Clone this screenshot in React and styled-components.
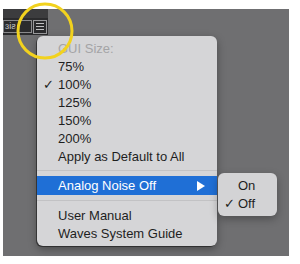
import React from "react";
import styled, { createGlobalStyle } from "styled-components";

const Global = createGlobalStyle`
  html, body { margin: 0; padding: 0; background: #ffffff; }
  body { font-family: "Liberation Sans", Arial, sans-serif; }
`;

const Page = styled.div`
  width: 300px;
  height: 264px;
  box-sizing: border-box;
  padding: 9px 11px 8px 3px;
  position: relative;
`;

const Panel = styled.div`
  position: relative;
  width: 100%;
  height: 100%;
  background: #6f6f71;
`;

const Toolbar = styled.div`
  width: 45px;
  display: flex;
  flex-direction: column;
`;

const TopStrip = styled.div`
  height: 9px;
  background: #3c3c3e;
`;

const ToolRow = styled.div`
  height: 17px;
  background: #2b2b2d;
  display: flex;
  align-items: center;
  gap: 1px;
`;

const NameBox = styled.div`
  width: 29px;
  height: 13px;
  box-sizing: border-box;
  border: 1px solid #8a8a8c;
  color: #c8c8ca;
  font-size: 9px;
  line-height: 11px;
  padding-left: 1px;
  overflow: hidden;
  white-space: nowrap;
`;

const MenuButton = styled.div`
  width: 14px;
  height: 14px;
  box-sizing: border-box;
  border: 1px solid #9a9a9c;
  display: flex;
  flex-direction: column;
  justify-content: center;
  gap: 2px;
  padding: 0 2px;
`;

const Bar = styled.div`
  height: 1px;
  background: #c0c0c2;
`;

const Menu = styled.div`
  position: absolute;
  left: 34px;
  top: 27px;
  width: 180px;
  box-sizing: border-box;
  padding: 3px 0 4px;
  background: #d5d5d7;
  border-radius: 6px;
  box-shadow: -1px 1px 0 rgba(20, 20, 20, 0.55), 0 3px 8px rgba(0, 0, 0, 0.35);
  font-size: 13px;
  color: #1e1e1e;
`;

const Item = styled.div`
  position: relative;
  height: ${(p) => (p.$active ? 19 : 18)}px;
  display: flex;
  align-items: center;
  padding-left: 21px;
  padding-right: 12px;
  white-space: nowrap;
  background: ${(p) => (p.$active ? "#1f6fd6" : "transparent")};
  color: ${(p) => (p.$active ? "#ffffff" : p.$disabled ? "#a4a4a6" : "#1e1e1e")};
`;

const Check = styled.span`
  position: absolute;
  left: ${(p) => p.$left || 6}px;
  top: 50%;
  transform: translateY(-50%);
  font-size: 13px;
  font-family: "DejaVu Sans", sans-serif;
`;

const Arrow = styled.svg`
  margin-left: auto;
  width: 8px;
  height: 10px;
`;

const Separator = styled.div`
  height: 1px;
  margin: 5px 0;
  background: #c2c2c4;
`;

const SubMenu = styled.div`
  position: absolute;
  left: 181px;
  top: -3px;
  width: 59px;
  box-sizing: border-box;
  padding: 3px 0 4px;
  background: #d3d3d5;
  border-radius: 6px;
  box-shadow: 0 3px 8px rgba(0, 0, 0, 0.3);
  color: #1e1e1e;
`;

const SubItem = styled.div`
  position: relative;
  height: 18px;
  display: flex;
  align-items: center;
  padding-left: 20px;
`;

const Circle = styled.svg`
  position: absolute;
  left: 15px;
  top: 1px;
  width: 60px;
  height: 60px;
  pointer-events: none;
`;

export default function App() {
  const sizes = ["75%", "100%", "125%", "150%", "200%"];
  return (
    <>
      <Global />
      <Page>
        <Panel>
          <Toolbar>
            <TopStrip />
            <ToolRow>
              <NameBox>ɜiƨ</NameBox>
              <MenuButton>
                <Bar />
                <Bar />
                <Bar />
              </MenuButton>
            </ToolRow>
          </Toolbar>
          <Menu>
            <Item $disabled>GUI Size:</Item>
            {sizes.map((s) => (
              <Item key={s}>
                {s === "100%" && <Check $left={6}>✓</Check>}
                {s}
              </Item>
            ))}
            <Item>Apply as Default to All</Item>
            <Separator />
            <Item $active>
              Analog Noise Off
              <Arrow viewBox="0 0 8 10">
                <polygon points="0,0 8,5 0,10" fill="#ffffff" />
              </Arrow>
              <SubMenu>
                <SubItem>On</SubItem>
                <SubItem>
                  <Check $left={6}>✓</Check>
                  Off
                </SubItem>
              </SubMenu>
            </Item>
            <Separator />
            <Item>User Manual</Item>
            <Item>Waves System Guide</Item>
          </Menu>
        </Panel>
        <Circle viewBox="0 0 60 60">
          <circle cx="30" cy="30" r="27" fill="none" stroke="#f2d21e" strokeWidth="3" />
        </Circle>
      </Page>
    </>
  );
}
